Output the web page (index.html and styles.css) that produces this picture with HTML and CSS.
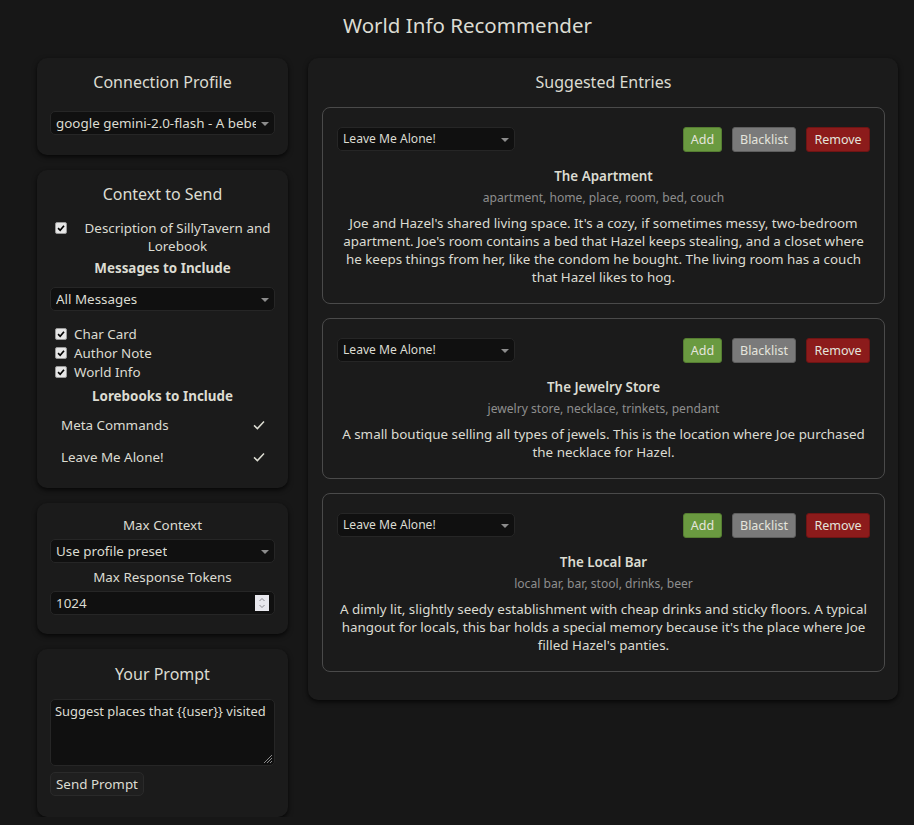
FILE: index.html
```html
<!DOCTYPE html>
<html>
<head>
<meta charset="utf-8">
<link rel="stylesheet" href="styles.css">
</head>
<body>
<h1 class="title">World Info Recommender</h1>
<div class="layout">
  <div class="sidebar">
    <section class="card card-conn">
      <h2 class="card-head">Connection Profile</h2>
      <div class="select"><span class="select-text">google gemini-2.0-flash - A bebe</span><span class="arrow"></span></div>
    </section>

    <section class="card card-ctx">
      <h2 class="card-head">Context to Send</h2>
      <div class="desc-row">
        <span class="cb"><svg viewBox="0 0 12 12" width="12" height="12"><path d="M2.5 6.2 L5 8.7 L9.6 3.2" fill="none" stroke="#000" stroke-width="2"/></svg></span>
        <span class="desc-text">Description of SillyTavern and Lorebook</span>
      </div>
      <div class="sub-head">Messages to Include</div>
      <div class="select sel-msgs"><span class="select-text">All Messages</span><span class="arrow"></span></div>
      <div class="cb-list">
        <label class="cb-row"><span class="cb"><svg viewBox="0 0 12 12" width="12" height="12"><path d="M2.5 6.2 L5 8.7 L9.6 3.2" fill="none" stroke="#000" stroke-width="2"/></svg></span>Char Card</label>
        <label class="cb-row"><span class="cb"><svg viewBox="0 0 12 12" width="12" height="12"><path d="M2.5 6.2 L5 8.7 L9.6 3.2" fill="none" stroke="#000" stroke-width="2"/></svg></span>Author Note</label>
        <label class="cb-row"><span class="cb"><svg viewBox="0 0 12 12" width="12" height="12"><path d="M2.5 6.2 L5 8.7 L9.6 3.2" fill="none" stroke="#000" stroke-width="2"/></svg></span>World Info</label>
      </div>
      <div class="sub-head lore-head">Lorebooks to Include</div>
      <ul class="lore-list">
        <li class="lore-item"><span>Meta Commands</span><svg viewBox="0 0 14 14" width="14" height="14"><path d="M2 7.4 L5.4 10.6 L12 3.6" fill="none" stroke="#dcdcd2" stroke-width="1.5"/></svg></li>
        <li class="lore-item"><span>Leave Me Alone!</span><svg viewBox="0 0 14 14" width="14" height="14"><path d="M2 7.4 L5.4 10.6 L12 3.6" fill="none" stroke="#dcdcd2" stroke-width="1.5"/></svg></li>
      </ul>
    </section>

    <section class="card card-max">
      <div class="field-label">Max Context</div>
      <div class="select sel-small-gap"><span class="select-text">Use profile preset</span><span class="arrow"></span></div>
      <div class="field-label label-gap">Max Response Tokens</div>
      <div class="num-input"><span>1024</span>
        <span class="spin"><svg viewBox="0 0 14 16" width="14" height="16"><path d="M4.5 6 L7 3.5 L9.5 6 M4.5 10 L7 12.5 L9.5 10" fill="none" stroke="#8a8a90" stroke-width="1"/></svg></span>
      </div>
    </section>

    <section class="card card-prompt">
      <h2 class="card-head">Your Prompt</h2>
      <div class="prompt-wrap">
        <textarea class="prompt" wrap="off">Suggest places that {{user}} visited</textarea>
        <svg class="grip" viewBox="0 0 12 12" width="12" height="12"><path d="M11 3 L3 11 M11 6 L6 11 M11 9 L9 11" stroke="#8a8a8a" stroke-width="1" fill="none"/></svg>
      </div>
      <button class="send-btn">Send Prompt</button>
    </section>
  </div>

  <section class="card panel">
    <h2 class="card-head">Suggested Entries</h2>
    <div class="entries">
      <article class="entry">
        <div class="entry-top">
          <div class="select entry-select"><span class="select-text">Leave Me Alone!</span><span class="arrow"></span></div>
          <div class="actions">
            <button class="btn btn-add">Add</button>
            <button class="btn btn-black">Blacklist</button>
            <button class="btn btn-remove">Remove</button>
          </div>
        </div>
        <div class="entry-title">The Apartment</div>
        <div class="entry-keys">apartment, home, place, room, bed, couch</div>
        <p class="entry-desc">Joe and Hazel's shared living space. It's a cozy, if sometimes messy, two-bedroom apartment. Joe's room contains a bed that Hazel keeps stealing, and a closet where he keeps things from her, like the condom he bought. The living room has a couch that Hazel likes to hog.</p>
      </article>
      <article class="entry">
        <div class="entry-top">
          <div class="select entry-select"><span class="select-text">Leave Me Alone!</span><span class="arrow"></span></div>
          <div class="actions">
            <button class="btn btn-add">Add</button>
            <button class="btn btn-black">Blacklist</button>
            <button class="btn btn-remove">Remove</button>
          </div>
        </div>
        <div class="entry-title">The Jewelry Store</div>
        <div class="entry-keys">jewelry store, necklace, trinkets, pendant</div>
        <p class="entry-desc">A small boutique selling all types of jewels. This is the location where Joe purchased the necklace for Hazel.</p>
      </article>
      <article class="entry">
        <div class="entry-top">
          <div class="select entry-select"><span class="select-text">Leave Me Alone!</span><span class="arrow"></span></div>
          <div class="actions">
            <button class="btn btn-add">Add</button>
            <button class="btn btn-black">Blacklist</button>
            <button class="btn btn-remove">Remove</button>
          </div>
        </div>
        <div class="entry-title">The Local Bar</div>
        <div class="entry-keys">local bar, bar, stool, drinks, beer</div>
        <p class="entry-desc">A dimly lit, slightly seedy establishment with cheap drinks and sticky floors. A typical hangout for locals, this bar holds a special memory because it's the place where Joe filled Hazel's panties.</p>
      </article>
    </div>
  </section>
</div>
</body>
</html>
```

FILE: styles.css
```css
* { box-sizing: border-box; }
html, body {
  margin: 0;
  background: #171717;
  color: #dcdcd2;
  font-family: "Noto Sans", "Open Sans", sans-serif;
  font-size: 13.4px;
  line-height: 18px;
}
.title {
  margin: 0;
  padding: 11px 0 0 21px;
  font-size: 20.5px;
  line-height: 28px;
  font-weight: 400;
  text-align: center;
}
.layout {
  display: flex;
  align-items: flex-start;
  gap: 20px;
  padding: 19px 16px 0 37px;
}
.sidebar {
  width: 251px;
  flex: none;
  display: flex;
  flex-direction: column;
  gap: 15px;
}
.card {
  background: #1b1b1b;
  border-radius: 10px;
  box-shadow: 0 2px 5px rgba(0, 0, 0, 0.75);
  padding: 12px 13px 19px;
}
.card-head {
  margin: 0;
  font-size: 16px;
  line-height: 24px;
  font-weight: 400;
  text-align: center;
}
.card-conn { padding-bottom: 20px; }
.card-conn .card-head { margin-bottom: 17px; }
.select {
  position: relative;
  height: 24px;
  background: #101010;
  border: 1px solid #262626;
  border-radius: 5px;
  padding: 0 18px 0 5px;
  display: flex;
  align-items: center;
  overflow: hidden;
  white-space: nowrap;
}
.select-text { overflow: hidden; }
.arrow {
  position: absolute;
  right: 5px;
  top: 10px;
  width: 0;
  height: 0;
  border-left: 4px solid transparent;
  border-right: 4px solid transparent;
  border-top: 4px solid #8c8c8c;
}
.desc-row {
  display: flex;
  align-items: flex-start;
  margin-top: 13px;
}
.cb {
  flex: none;
  width: 12px;
  height: 12px;
  background: #e6e6e6;
  border: 1px solid #9a9a9a;
  border-radius: 2px;
  display: inline-flex;
  align-items: center;
  justify-content: center;
  margin-left: 5px;
  margin-right: 7px;
}
.cb svg { width: 10px; height: 10px; }
.desc-row .cb { margin-top: 3px; }
.desc-text {
  flex: 1;
  text-align: center;
  padding-left: 6px;
}
.sub-head {
  font-weight: 700;
  text-align: center;
  margin-top: 4px;
}
.sel-msgs { margin-top: 10px; }
.cb-list {
  margin-top: 13px;
  display: flex;
  flex-direction: column;
}
.cb-row {
  display: flex;
  align-items: center;
  height: 19px;
}
.lore-head { margin-top: 6px; }
.lore-list {
  list-style: none;
  margin: 4px 0 0;
  padding: 0;
}
.lore-item {
  height: 32px;
  display: flex;
  align-items: center;
  justify-content: space-between;
  padding: 0 9px 0 11px;
}
.card-ctx { padding-bottom: 15px; }
.card-max { padding-top: 13px; padding-bottom: 19px; }
.field-label { text-align: center; }
.sel-small-gap { margin-top: 5px; }
.label-gap { margin-top: 5px; }
.num-input {
  margin-top: 5px;
  height: 24px;
  background: #101010;
  border: 1px solid #262626;
  border-radius: 5px;
  padding: 0 5px;
  display: flex;
  align-items: center;
  justify-content: space-between;
}
.spin {
  width: 14px;
  height: 16px;
  background: #e8e8ee;
  display: flex;
}
.card-prompt { padding-top: 13px; padding-bottom: 21px; }
.card-prompt .card-head { margin-bottom: 13px; }
.prompt-wrap {
  position: relative;
}
.prompt {
  display: block;
  width: 100%;
  height: 67px;
  resize: none;
  overflow: hidden;
  background: #101010;
  color: #dcdcd2;
  border: 1px solid #262626;
  border-radius: 5px;
  padding: 2px 4px;
  font-family: inherit;
  font-size: 12.9px;
  line-height: 18px;
}
.grip {
  position: absolute;
  right: 2px;
  bottom: 2px;
}
.send-btn {
  margin-top: 6px;
  height: 24px;
  padding: 0 5px;
  background: #1f1f1f;
  color: #dcdcd2;
  border: 1px solid #2a2a2a;
  border-radius: 5px;
  font: inherit;
}
.panel {
  flex: 1;
  padding: 12px 13px 28px 14px;
}
.panel .card-head { margin-bottom: 13px; }
.entries {
  display: flex;
  flex-direction: column;
  gap: 14px;
}
.entry {
  border: 1px solid #4a4a4a;
  border-radius: 8px;
  padding: 19px 14px 17px;
  text-align: center;
}
.entry-top {
  display: flex;
  justify-content: space-between;
  align-items: flex-start;
}
.entry-select {
  width: 178px;
  font-size: 12.1px;
  text-align: left;
}
.actions {
  display: flex;
  gap: 10px;
}
.btn {
  height: 25px;
  padding: 0;
  font-family: inherit;
  font-size: 12.5px;
  color: #e4e4dc;
  border-radius: 3px;
  border: 1px solid;
}
.btn-add { width: 39px; background: #6a9a40; border-color: #557d31; }
.btn-black { width: 64px; background: #7a7a7a; border-color: #5e5e5e; }
.btn-remove { width: 64px; background: #8c1b1b; border-color: #6e1414; }
.entry-title {
  margin-top: 15px;
  font-weight: 600;
}
.entry-keys {
  margin-top: 4px;
  font-size: 12.1px;
  color: #8e8e8e;
}
.entry-desc {
  margin: 7px 0 0;
}
```
